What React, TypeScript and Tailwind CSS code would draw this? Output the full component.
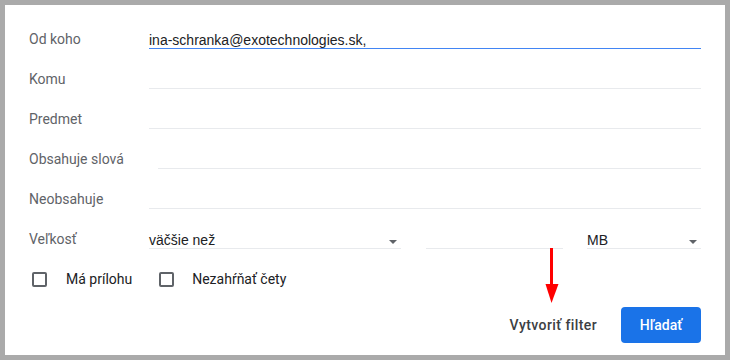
import React from "react";

const roboto = { fontFamily: "Roboto, 'Noto Sans', sans-serif" };
const arial = { fontFamily: "'Liberation Sans', Arial, sans-serif" };

function Row({ label, children }: { label: string; children?: React.ReactNode }) {
  return (
    <div className="flex h-10 items-start">
      <div className="w-[120px] h-10 flex items-center text-[14px] text-[#5f6368]" style={roboto}>
        {label}
      </div>
      {children}
    </div>
  );
}

function Line({ className = "" }: { className?: string }) {
  return <div className={`h-[30px] border-b border-[#e8eaed] ${className}`} />;
}

function Caret() {
  return (
    <svg width="8" height="4" viewBox="0 0 8 4" className="mb-[4px] mr-[4px]">
      <path d="M0 0 L8 0 L4 4 Z" fill="#5f6368" />
    </svg>
  );
}

function Checkbox() {
  return <div className="w-[15px] h-[15px] border-2 border-[#5f6368] rounded-[2px]" />;
}

export default function App() {
  return (
    <div className="w-[730px] h-[360px] bg-[#aaaaaa] p-[5px]">
      <div className="relative w-full h-full bg-white pl-[24px] pr-[24px] pt-[14px]">
        <Row label="Od koho">
          <div className="flex-1 h-[30px] flex flex-col">
            <div
              className="flex-1 flex items-end pb-[0px] leading-[16px] text-[14px] text-[#202124]"
              style={arial}
            >
              ina-schranka@exotechnologies.sk,
            </div>
            <div className="h-[1px] bg-[#4285f4]" />
          </div>
        </Row>
        <Row label="Komu">
          <Line className="flex-1" />
        </Row>
        <Row label="Predmet">
          <Line className="flex-1" />
        </Row>
        <Row label="Obsahuje slová">
          <Line className="flex-1 ml-[9px]" />
        </Row>
        <Row label="Neobsahuje">
          <Line className="flex-1" />
        </Row>
        <Row label="Veľkosť">
          <div
            className="w-[252px] h-[30px] border-b border-[#e8eaed] flex items-end justify-between leading-[16px] text-[14px] text-[#202124]"
            style={arial}
          >
            <span>väčšie než</span>
            <Caret />
          </div>
          <Line className="w-[137px] ml-[25px]" />
          <div
            className="w-[114px] ml-[24px] h-[30px] border-b border-[#e8eaed] flex items-end justify-between leading-[16px] text-[14px] text-[#202124]"
            style={arial}
          >
            <span>MB</span>
            <Caret />
          </div>
        </Row>
        <div className="flex h-10 items-center pl-[3px] text-[14px] text-[#202124]" style={roboto}>
          <Checkbox />
          <span className="ml-[19px]">Má prílohu</span>
          <div className="ml-[27px]">
            <Checkbox />
          </div>
          <span className="ml-[18px]">Nezahŕňať čety</span>
        </div>
        <div className="flex justify-end items-center mt-[8px]">
          <span className="text-[14px] font-medium tracking-[0.4px] text-[#3c4043] mr-[24px]" style={roboto}>
            Vytvoriť filter
          </span>
          <button
            className="w-[80px] h-[36px] rounded-[4px] bg-[#1a73e8] text-white text-[14px] font-medium"
            style={roboto}
          >
            Hľadať
          </button>
        </div>
        <svg
          className="absolute left-[540px] top-[243px]"
          width="14"
          height="57"
          viewBox="0 0 14 57"
        >
          <rect x="5" y="0" width="3" height="40" fill="#ff0000" />
          <path d="M0.5 36 L13.5 36 L6.5 55 Z" fill="#ff0000" />
        </svg>
      </div>
    </div>
  );
}
